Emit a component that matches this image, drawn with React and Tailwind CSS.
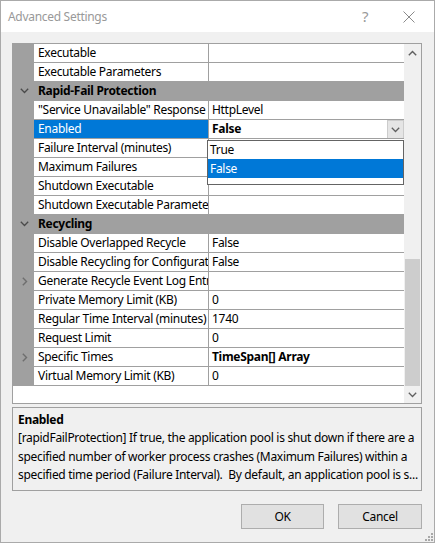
import React from "react";

const rows = [
  { t: "row", name: "Executable", value: "" },
  { t: "row", name: "Executable Parameters", value: "" },
  { t: "header", name: "Rapid-Fail Protection" },
  { t: "row", name: '"Service Unavailable" Response Type', value: "HttpLevel" },
  { t: "row", name: "Enabled", value: "False", selected: true, bold: true },
  { t: "row", name: "Failure Interval (minutes)", value: "" },
  { t: "row", name: "Maximum Failures", value: "" },
  { t: "row", name: "Shutdown Executable", value: "" },
  { t: "row", name: "Shutdown Executable Parameters", value: "" },
  { t: "header", name: "Recycling" },
  { t: "row", name: "Disable Overlapped Recycle", value: "False" },
  { t: "row", name: "Disable Recycling for Configuration Changes", value: "False" },
  { t: "row", name: "Generate Recycle Event Log Entry", value: "", expand: true },
  { t: "row", name: "Private Memory Limit (KB)", value: "0" },
  { t: "row", name: "Regular Time Interval (minutes)", value: "1740" },
  { t: "row", name: "Request Limit", value: "0" },
  { t: "row", name: "Specific Times", value: "TimeSpan[] Array", expand: true, bold: true },
  { t: "row", name: "Virtual Memory Limit (KB)", value: "0" },
];

function ChevDown({ color = "#5a5a5a" }) {
  return (
    <svg width="9" height="6" viewBox="0 0 9 6">
      <path d="M0.8 0.8 L4.5 4.5 L8.2 0.8" fill="none" stroke={color} strokeWidth="1.3" />
    </svg>
  );
}

function ChevRight({ color = "#7a7a7a" }) {
  return (
    <svg width="6" height="9" viewBox="0 0 6 9">
      <path d="M0.8 0.8 L4.5 4.5 L0.8 8.2" fill="none" stroke={color} strokeWidth="1.4" />
    </svg>
  );
}

function ChevUp({ color = "#5a5a5a" }) {
  return (
    <svg width="9" height="6" viewBox="0 0 9 6">
      <path d="M0.8 5.2 L4.5 1.5 L8.2 5.2" fill="none" stroke={color} strokeWidth="1.4" />
    </svg>
  );
}

function Row({ r }) {
  if (r.t === "header") {
    return (
      <div className="flex h-[19px] border-b border-[#a0a0a0] bg-[#a0a0a0]">
        <div className="w-[21px] flex items-center justify-center pl-[1px]">
          <ChevDown color="#4a4a4a" />
        </div>
        <div className="pl-[4px] font-bold text-black leading-[18px] whitespace-nowrap">{r.name}</div>
      </div>
    );
  }
  return (
    <div className="flex h-[19px] border-b border-[#a0a0a0]">
      <div className="w-[21px] shrink-0 bg-[#a0a0a0] flex items-center justify-center pl-[2px]">
        {r.expand && <ChevRight color="#6e6e6e" />}
      </div>
      <div
        className={
          "w-[175px] shrink-0 border-r border-[#a0a0a0] pl-[4px] leading-[18px] overflow-hidden whitespace-nowrap " +
          (r.selected ? "bg-[#0078d7] text-white" : "bg-white text-black")
        }
      >
        {r.name}
      </div>
      <div
        className={
          "flex-1 flex items-stretch bg-white pl-[3px] leading-[18px] whitespace-nowrap overflow-hidden text-black " +
          (r.bold ? "font-bold" : "")
        }
      >
        <span className="flex-1">{r.value}</span>
        {r.selected && (
          <div className="w-[17px] h-[19px] bg-[#e5e5e5] border border-[#cccccc] flex items-center justify-center">
            <ChevDown color="#606060" />
          </div>
        )}
      </div>
    </div>
  );
}

function Grip() {
  const dots = [
    [7, 1],
    [7, 4],
    [4, 4],
    [7, 7],
    [4, 7],
    [1, 7],
  ];
  return (
    <svg width="9" height="9" viewBox="0 0 9 9">
      {dots.map(([x, y], i) => (
        <rect key={i} x={x} y={y} width="2" height="2" fill="#a8a8a8" />
      ))}
    </svg>
  );
}

export default function App() {
  return (
    <div className="w-[435px] h-[543px] border border-[#aaaaaa] bg-[#f0f0f0] flex flex-col font-['Noto_Sans',sans-serif] text-[12px] tracking-[-0.3px] text-black relative overflow-hidden">
      {/* Title bar */}
      <div className="h-[31px] bg-white flex items-center shrink-0">
        <div className="pl-[7px] text-[12px] text-[#999999] flex-1 leading-none">Advanced Settings</div>
        <div className="w-[30px] text-[15px] text-[#999999] text-center leading-none mr-[14px]">?</div>
        <div className="w-[30px] mr-[10px] flex items-center justify-center">
          <svg width="12" height="12" viewBox="0 0 12 12">
            <path d="M0.5 0.5 L11.5 11.5 M11.5 0.5 L0.5 11.5" stroke="#8a8a8a" strokeWidth="1" fill="none" />
          </svg>
        </div>
      </div>

      {/* Body */}
      <div className="flex-1 flex flex-col pl-[11px] pt-[11px]">
        {/* Property grid */}
        <div className="w-[410px] h-[361px] border border-[#a0a0a0] bg-white flex">
          <div className="flex-1 relative">
            {rows.map((r, i) => (
              <Row key={i} r={r} />
            ))}
            {/* Dropdown list */}
            <div className="absolute left-[194px] top-[96px] w-[197px] h-[45px] bg-white border border-[#646464] flex flex-col">
              <div className="h-[18px] pl-[2px] leading-[18px]">True</div>
              <div className="h-[19px] pl-[2px] leading-[19px] bg-[#0078d7] text-white">False</div>
            </div>
          </div>
          {/* Scrollbar */}
          <div className="w-[17px] bg-[#f0f0f0] flex flex-col">
            <div className="h-[17px] flex items-center justify-center">
              <ChevUp color="#606060" />
            </div>
            <div className="h-[198px]" />
            <div className="h-[127px] ml-[1px] mr-[1px] bg-[#cdcdcd]" />
            <div className="h-[17px] flex items-center justify-center">
              <ChevDown color="#606060" />
            </div>
          </div>
        </div>

        {/* Description */}
        <div className="w-[410px] h-[84px] mt-[3px] border border-[#a0a0a0] bg-[#f0f0f0] pl-[5px] pt-[3px] whitespace-nowrap overflow-hidden">
          <div className="font-bold leading-[18px]">Enabled</div>
          <div className="leading-[18.5px]">
            [rapidFailProtection] If true, the application pool is shut down if there are a
          </div>
          <div className="leading-[18.5px]">
            specified number of worker process crashes (Maximum Failures) within a
          </div>
          <div className="leading-[18.5px]">
            specified time period (Failure Interval).&nbsp; By default, an application pool is s...
          </div>
        </div>

        {/* Buttons */}
        <div className="w-[410px] flex justify-end gap-[14px] mt-[13px]">
          <button className="w-[83px] h-[25px] bg-[#e1e1e1] border border-[#adadad] text-[12px] leading-none">
            OK
          </button>
          <button className="w-[84px] h-[25px] bg-[#e1e1e1] border border-[#adadad] text-[12px] leading-none">
            Cancel
          </button>
        </div>
      </div>

      <div className="absolute right-[1px] bottom-[1px]">
        <Grip />
      </div>
    </div>
  );
}
